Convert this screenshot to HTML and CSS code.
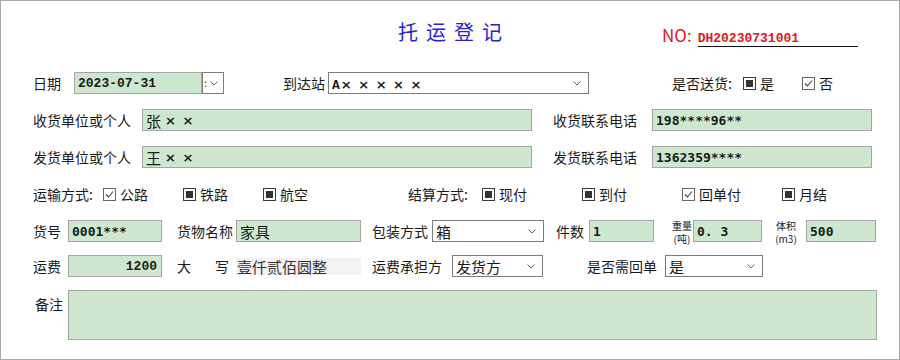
FILE: index.html
```html
<!DOCTYPE html>
<html lang="zh-CN">
<head>
  <meta charset="UTF-8">
  <title>托运登记</title>
  <link rel="stylesheet" href="styles.css">
</head>
<body>

<div class="sheet">
  <div class="head">
    <h1 class="title">托运登记</h1>
    <div class="no">
      <span class="no-lbl">NO:</span>
      <span class="no-val">DH20230731001</span>
    </div>
  </div>

  <div class="row r1">
    <span class="lbl lbl-date">日期</span>
    <div class="field green date serif-b">2023-07-31</div>
    <div class="date-btn"><span class="cut">:</span><svg class="chev" viewBox="0 0 8 5"><polyline points="0.5,0.5 4,4 7.5,0.5"/></svg></div>
    <span class="lbl lbl-station">到达站</span>
    <div class="field select station"><span><span class="serif-b">A</span><span class="times">× × × × ×</span></span><svg class="chev" viewBox="0 0 8 5"><polyline points="0.5,0.5 4,4 7.5,0.5"/></svg></div>
    <span class="lbl lbl-deliver">是否送货:</span>
    <label class="opt opt-yes"><span class="box fill"></span>是</label>
    <label class="opt"><span class="box check"><svg viewBox="0 0 11 11"><polyline points="2,5.5 4.5,8 9,2.5"/></svg></span>否</label>
  </div>

  <div class="row">
    <span class="lbl lbl-party">收货单位或个人</span>
    <div class="field green party"><span class="cjk">张</span><span class="times">× ×</span></div>
    <span class="lbl lbl-phone">收货联系电话</span>
    <div class="field green phone sans-b">198****96**</div>
  </div>

  <div class="row">
    <span class="lbl lbl-party">发货单位或个人</span>
    <div class="field green party"><span class="cjk">王</span><span class="times">× ×</span></div>
    <span class="lbl lbl-phone">发货联系电话</span>
    <div class="field green phone sans-b">1362359****</div>
  </div>

  <div class="row">
    <span class="lbl lbl-way">运输方式:</span>
    <label class="opt opt-way"><span class="box check"><svg viewBox="0 0 11 11"><polyline points="2,5.5 4.5,8 9,2.5"/></svg></span>公路</label>
    <label class="opt opt-way"><span class="box fill"></span>铁路</label>
    <label class="opt opt-way"><span class="box fill"></span>航空</label>
    <span class="lbl lbl-pay">结算方式:</span>
    <label class="opt opt-pay"><span class="box fill"></span>现付</label>
    <label class="opt opt-pay"><span class="box fill"></span>到付</label>
    <label class="opt opt-pay"><span class="box check"><svg viewBox="0 0 11 11"><polyline points="2,5.5 4.5,8 9,2.5"/></svg></span>回单付</label>
    <label class="opt"><span class="box fill"></span>月结</label>
  </div>

  <div class="row">
    <span class="lbl lbl-short">货号</span>
    <div class="field green code sans-b">0001***</div>
    <span class="lbl lbl-name">货物名称</span>
    <div class="field green goods"><span class="cjk">家具</span></div>
    <span class="lbl lbl-pack">包装方式</span>
    <div class="field select pack"><span class="cjk">箱</span><svg class="chev" viewBox="0 0 8 5"><polyline points="0.5,0.5 4,4 7.5,0.5"/></svg></div>
    <span class="lbl lbl-count">件数</span>
    <div class="field green count sans-b">1</div>
    <span class="lbl lbl-stack lbl-weight"><span>重量</span><span>(吨)</span></span>
    <div class="field green weight sans-b">0. 3</div>
    <span class="lbl lbl-stack lbl-volume"><span>体积</span><span>(m3)</span></span>
    <div class="field green volume sans-b">500</div>
  </div>

  <div class="row r6">
    <span class="lbl lbl-short">运费</span>
    <div class="field green fee serif-b">1200</div>
    <span class="lbl lbl-big">大</span>
    <span class="lbl lbl-write">写</span>
    <div class="upper"><span class="cjk">壹仟贰佰圆整</span></div>
    <span class="lbl lbl-payer">运费承担方</span>
    <div class="field select payer"><span class="cjk">发货方</span><svg class="chev" viewBox="0 0 8 5"><polyline points="0.5,0.5 4,4 7.5,0.5"/></svg></div>
    <span class="lbl lbl-return">是否需回单</span>
    <div class="field select return"><span class="cjk">是</span><svg class="chev" viewBox="0 0 8 5"><polyline points="0.5,0.5 4,4 7.5,0.5"/></svg></div>
  </div>

  <div class="row r7">
    <span class="lbl lbl-note">备注</span>
    <div class="field green note"></div>
  </div>
</div>

</body>
</html>
```

FILE: styles.css
```css
body {
  margin: 0;
  font-family: "Noto Sans CJK SC", "Microsoft YaHei", sans-serif;
  font-size: 14px;
  color: #1a1a1a;
  background: #fff;
}
.sheet {
  width: 900px;
  height: 360px;
  box-sizing: border-box;
  border: 1px solid #a9a9a9;
  padding-left: 32px;
}
.head {
  display: flex;
  align-items: center;
  height: 28px;
  padding-top: 17px;
}
.title {
  margin: 0 0 0 365px;
  font-size: 20px;
  font-weight: normal;
  line-height: 28px;
  letter-spacing: 8px;
  color: #2424d4;
}
.no {
  display: flex;
  align-items: baseline;
  margin-left: 152px;
  padding-top: 4px;
  color: #e01818;
}
.no-lbl {
  font-size: 17px;
}
.no-val {
  width: 160px;
  margin-left: 6px;
  font-family: "Liberation Mono", monospace;
  font-weight: bold;
  font-size: 13px;
  line-height: 15px;
  border-bottom: 1px solid #111;
}

.row {
  display: flex;
  align-items: center;
  height: 22px;
  margin-top: 15px;
}
.r1 {
  margin-top: 26px;
}
.r6 {
  margin-top: 13px;
}
.r7 {
  margin-top: 13px;
  height: 50px;
  align-items: flex-start;
}

.lbl {
  flex: none;
  white-space: nowrap;
  line-height: 22px;
}
.field {
  flex: none;
  display: flex;
  align-items: center;
  box-sizing: border-box;
  height: 22px;
  padding: 0 3px;
  border: 1px solid #a6a6a6;
  white-space: nowrap;
}
.green {
  background: #cde8cf;
}
.select {
  justify-content: space-between;
  padding-right: 7px;
  border-color: #7c7c7c;
  background: #fff;
}
.chev {
  width: 8px;
  height: 5px;
  fill: none;
  stroke: #666;
  stroke-width: 1;
}

.serif-b {
  font-family: "Liberation Mono", monospace;
  font-weight: bold;
  font-size: 13px;
}
.sans-b {
  font-family: "DejaVu Sans Mono", monospace;
  font-weight: bold;
  font-size: 13px;
}
.cjk {
  font-size: 15px;
}
.times {
  font-family: "DejaVu Sans", sans-serif;
  font-weight: bold;
  font-size: 13px;
  letter-spacing: 0.5px;
  word-spacing: 1px;
}

/* row 1 */
.lbl-date { width: 41px; }
.date { width: 128px; }
.date-btn {
  display: flex;
  align-items: center;
  justify-content: space-between;
  box-sizing: border-box;
  width: 22px;
  height: 22px;
  padding: 0 5px 0 1px;
  border: 1px solid #7c7c7c;
  background: #fff;
}
.cut {
  font-size: 10px;
  line-height: 12px;
}
.lbl-station { margin-left: 59px; width: 45px; }
.station { width: 261px; }
.station .times { margin-left: 1px; }
.lbl-deliver { margin-left: 83px; width: 71px; }
.opt-yes { width: 59px; }

/* option boxes */
.opt {
  flex: none;
  display: flex;
  align-items: center;
  gap: 4px;
  line-height: 22px;
}
.box {
  box-sizing: border-box;
  width: 13px;
  height: 13px;
  border: 1px solid #3a3a3a;
}
.box.fill {
  padding: 2px;
  background: #333;
  background-clip: content-box;
}
.box.check {
  border-color: #666;
}
.box.check svg {
  display: block;
  width: 11px;
  height: 11px;
  fill: none;
  stroke: #444;
  stroke-width: 1.1;
}

/* rows 2, 3 */
.lbl-party { width: 109px; }
.party { width: 390px; }
.party .cjk { margin-right: 4px; }
.lbl-phone { margin-left: 21px; width: 99px; }
.phone { width: 220px; }

/* row 4 */
.lbl-way { width: 70px; }
.opt-way { width: 80px; }
.lbl-pay { margin-left: 65px; width: 74px; }
.opt-pay { width: 100px; }

/* row 5 */
.lbl-short { width: 35px; }
.code { width: 94px; }
.lbl-name { margin-left: 15px; width: 59px; }
.goods { width: 125px; }
.lbl-pack { margin-left: 11px; width: 60px; }
.pack { width: 112px; }
.lbl-count { margin-left: 12px; width: 33px; }
.count { width: 65px; }
.lbl-stack {
  display: flex;
  flex-direction: column;
  align-items: center;
  gap: 1px;
  font-size: 10px;
  line-height: 12px;
  margin-top: 2px;
}
.lbl-weight { margin-left: 17px; width: 22px; }
.weight { width: 69px; }
.lbl-volume { margin-left: 13px; width: 22px; margin-right: 9px; }
.volume { width: 70px; }

/* row 6 */
.fee {
  width: 94px;
  justify-content: flex-end;
  padding-right: 4px;
}
.lbl-big { margin-left: 15px; width: 14px; }
.lbl-write { margin-left: 24px; width: 21px; }
.upper {
  flex: none;
  box-sizing: border-box;
  width: 125px;
  height: 17px;
  padding-left: 1px;
  background: #f2f2f2;
  line-height: 17px;
  color: #333;
}
.lbl-payer { margin-left: 11px; width: 80px; }
.payer { width: 91px; }
.lbl-return { margin-left: 44px; width: 78px; }
.return { width: 98px; }

/* row 7 */
.lbl-note {
  margin-left: 2px;
  width: 33px;
  padding-top: 3px;
}
.note {
  width: 809px;
  height: 50px;
}
```
